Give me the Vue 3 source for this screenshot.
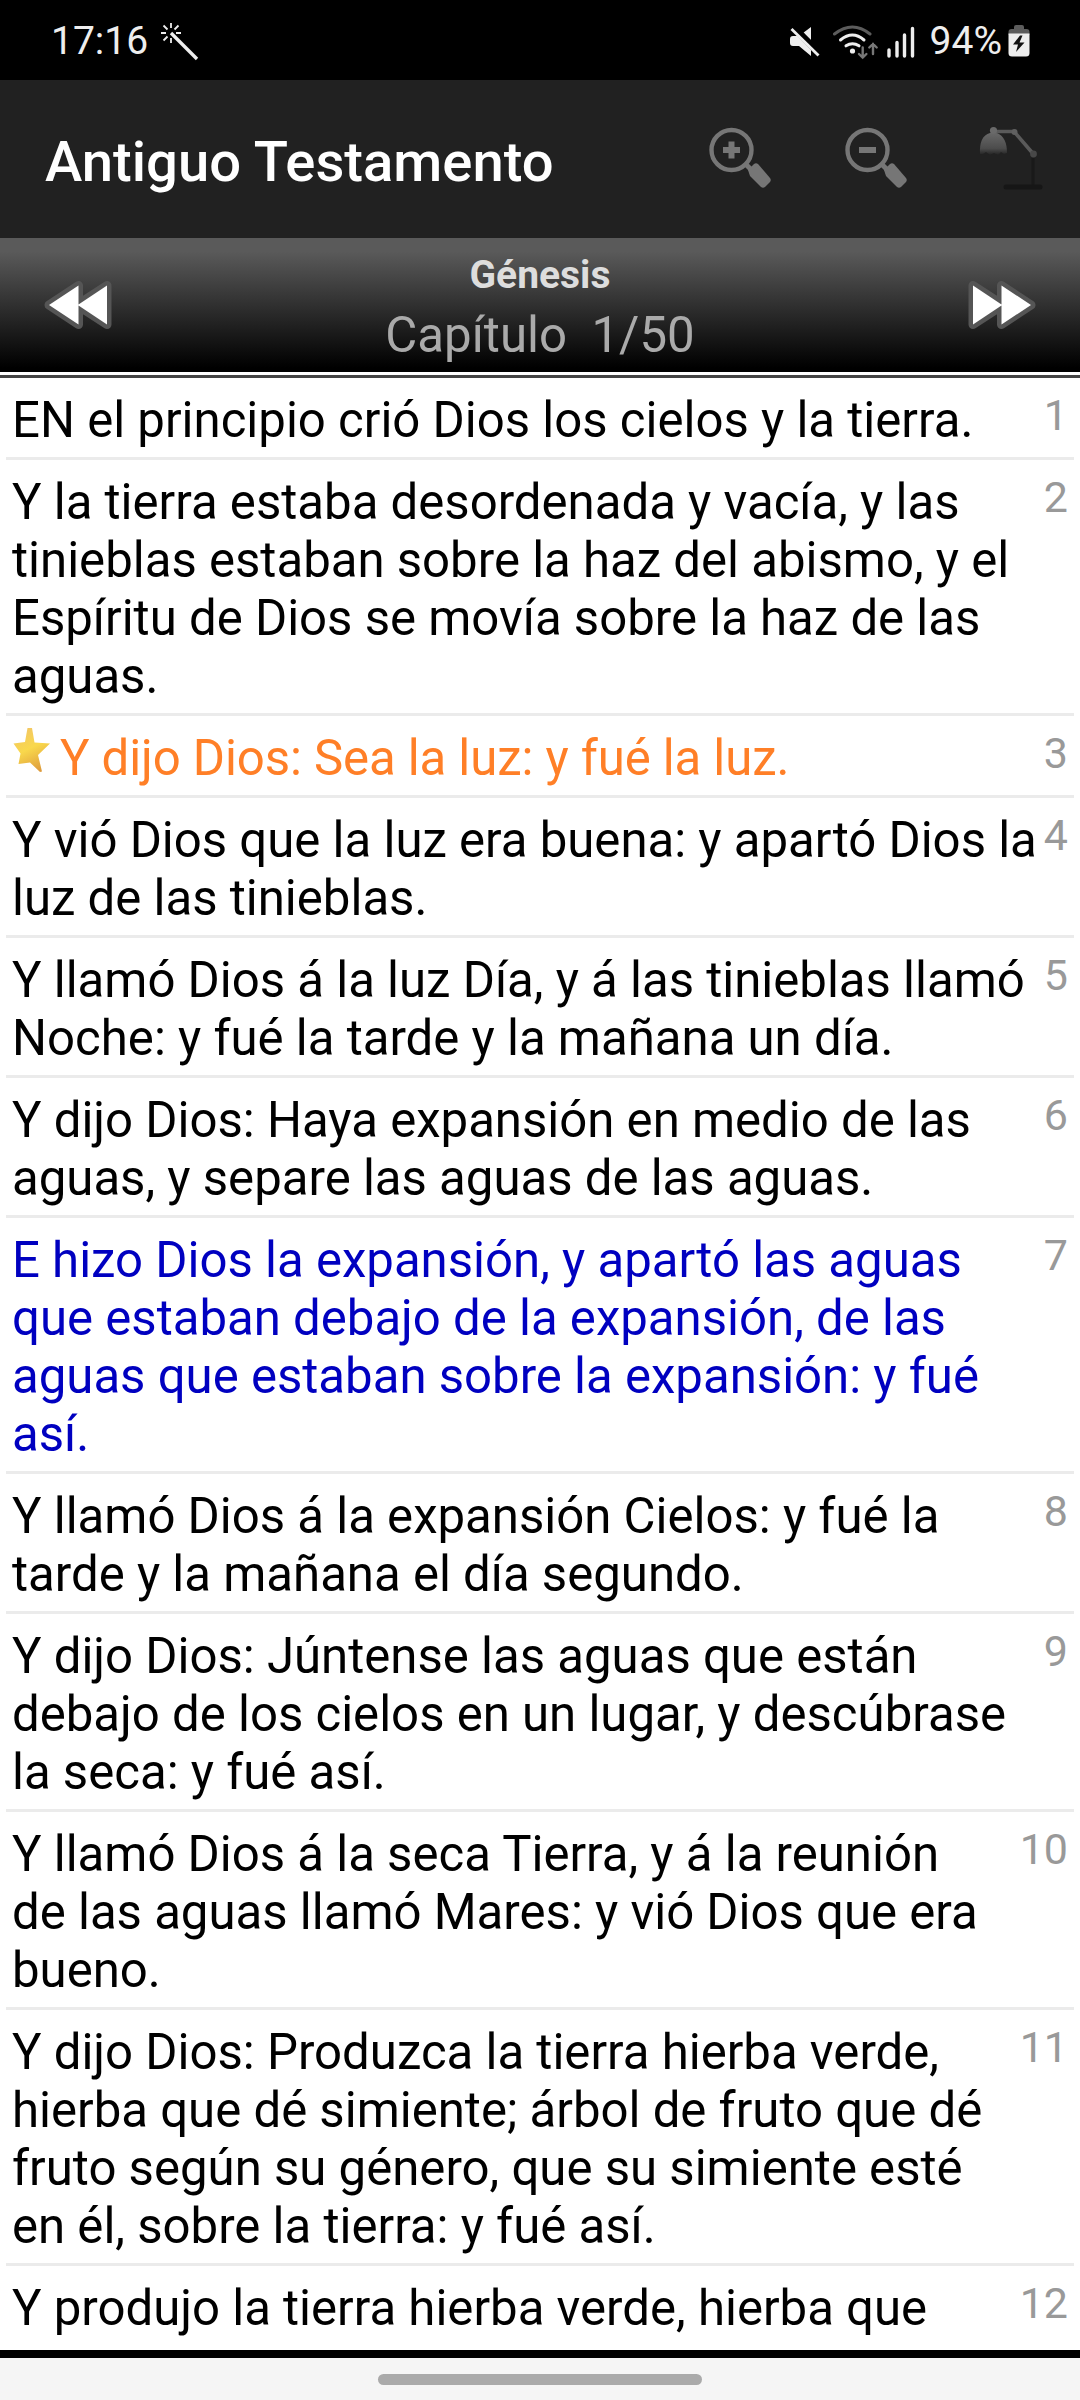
<script setup>
const verses = [
  { n: 1, lines: ['EN el principio crió Dios los cielos y la tierra.'] },
  {
    n: 2,
    lines: [
      'Y la tierra estaba desordenada y vacía, y las',
      'tinieblas estaban sobre la haz del abismo, y el',
      'Espíritu de Dios se movía sobre la haz de las',
      'aguas.',
    ],
  },
  { n: 3, tone: 'orange', star: true, lines: ['Y dijo Dios: Sea la luz: y fué la luz.'] },
  { n: 4, lines: ['Y vió Dios que la luz era buena: y apartó Dios la', 'luz de las tinieblas.'] },
  { n: 5, lines: ['Y llamó Dios á la luz Día, y á las tinieblas llamó', 'Noche: y fué la tarde y la mañana un día.'] },
  { n: 6, lines: ['Y dijo Dios: Haya expansión en medio de las', 'aguas, y separe las aguas de las aguas.'] },
  {
    n: 7,
    tone: 'blue',
    lines: [
      'E hizo Dios la expansión, y apartó las aguas',
      'que estaban debajo de la expansión, de las',
      'aguas que estaban sobre la expansión: y fué',
      'así.',
    ],
  },
  { n: 8, lines: ['Y llamó Dios á la expansión Cielos: y fué la', 'tarde y la mañana el día segundo.'] },
  {
    n: 9,
    lines: [
      'Y dijo Dios: Júntense las aguas que están',
      'debajo de los cielos en un lugar, y descúbrase',
      'la seca: y fué así.',
    ],
  },
  {
    n: 10,
    lines: ['Y llamó Dios á la seca Tierra, y á la reunión', 'de las aguas llamó Mares: y vió Dios que era', 'bueno.'],
  },
  {
    n: 11,
    lines: [
      'Y dijo Dios: Produzca la tierra hierba verde,',
      'hierba que dé simiente; árbol de fruto que dé',
      'fruto según su género, que su simiente esté',
      'en él, sobre la tierra: y fué así.',
    ],
  },
  { n: 12, lines: ['Y produjo la tierra hierba verde, hierba que'] },
]
</script>

<template>
  <div class="screen">
    <header class="status">
      <span class="clock">17:16</span>
      <svg class="wand" width="40" height="40" viewBox="0 0 40 40" fill="none" stroke="#eee">
        <path d="M11 11L37 37" stroke-width="3.4" />
        <path d="M11 1v5M11 16v5M1 11h5M16 11h5M3.5 3.5l4 4M18.500 3.500l-4 4M3.500 18.500l4-4" stroke-width="1.8" />
      </svg>
      <svg class="tray" width="128" height="40" viewBox="0 0 128 40">
        <g>
          <path d="M1 16q0-3 3-3h6L22 4v29L10 23H4q-3 0-3-3z" fill="#eee" />
          <path d="M4 3.600L31 31" stroke="#000" stroke-width="7" />
          <path d="M2.500 6L29.500 32.500" stroke="#eee" stroke-width="2.800" />
        </g>
        <g fill="none" stroke-linecap="round">
          <path d="M45.500 11Q63.500-3 81 11" stroke="#5c5c5c" stroke-width="3" />
          <path d="M51.500 17Q63.500 7 75 17" stroke="#eee" stroke-width="3" />
          <path d="M57 22.800Q63.500 18.500 70 22.800" stroke="#eee" stroke-width="3" />
          <circle cx="63.500" cy="28" r="2.600" fill="#eee" />
          <path d="M73.700 24.500v10M70 31l3.700 3.600 3.700-3.600M84 31V21M80.300 24.500l3.700-3.600 3.700 3.600" stroke="#777" stroke-width="2.400" />
        </g>
        <path d="M100 27v6M108 19.500V33M115.500 12V33M123.500 5.500V33" stroke="#eee" stroke-width="3.400" stroke-linecap="round" />
      </svg>
      <span class="percent">94%</span>
      <svg class="battery" width="22" height="34" viewBox="0 0 22 34">
        <path d="M0.500 10V7q0-3 3-3H6V2q0-2 2-2h6q2 0 2 2v2h2.500q3 0 3 3v3z" fill="#5c5c5c" />
        <path d="M0.500 8.500h21V28q0 3.500-3.500 3.500H4Q0.500 31.500 0.500 28z" fill="#eee" />
        <path d="M12 10.500L5 19.500h5L8 27l8.500-9.500h-5l3-7z" fill="#111" />
      </svg>
    </header>

    <div class="appbar">
      <h1>Antiguo Testamento</h1>
      <div class="actions">
        <svg v-for="kind in ['plus', 'minus']" :key="kind" width="64" height="64" viewBox="0 0 64 64" fill="none" stroke="#767676">
          <circle cx="22.500" cy="23" r="20" stroke-width="4.400" />
          <path d="M14 23h17" stroke-width="6" />
          <path v-if="kind === 'plus'" d="M22.500 14.500v17" stroke-width="6" />
          <path d="M36 36.500l6 6" stroke-width="5" />
          <path d="M39 43l6-6q2-1.500 4 0L61 51q1.500 2 0 4l-5 5q-2 1.500-4 0L41 49z" fill="#767676" stroke="none" />
        </svg>
        <svg class="lamp" width="66" height="66" viewBox="0 0 66 66" fill="none">
          <defs>
            <linearGradient id="shade" x1="0" y1="0" x2="0" y2="1">
              <stop offset="0" stop-color="#686868" />
              <stop offset="0.700" stop-color="#4c4c4c" />
              <stop offset="1" stop-color="#222" />
            </linearGradient>
          </defs>
          <path d="M2 28Q1 10 12 7h7q10 4 10 20l-3 1-3-2-3 3-4-2-4 2-4-3-3 2z" fill="url(#shade)" />
          <path d="M15 5.500H36L54.500 27" stroke="#5a5a5a" stroke-width="3.600" />
          <circle cx="15.500" cy="4.500" r="3.600" fill="#6a6a6a" />
          <circle cx="36.500" cy="6" r="3" fill="#606060" />
          <circle cx="55.500" cy="28" r="3.400" fill="#484848" />
          <path d="M55 32v29" stroke="#191919" stroke-width="3" />
          <path d="M28 61h34" stroke="#161616" stroke-width="5" stroke-linecap="round" />
        </svg>
      </div>
    </div>

    <nav class="chapter">
      <svg width="68" height="50" viewBox="0 0 68 50">
        <path d="M5 25L34.500 5.500V24L63 5.500V44.500L34.500 26V44.500z" fill="#555" stroke="#555" stroke-width="9" stroke-linejoin="round" />
        <path d="M5 25L34.500 5.500V24.500L63 5.500V44.500L34.500 25.500V44.500z" fill="#fff" />
      </svg>
      <div class="place">
        <strong>Génesis</strong>
        <span>Capítulo&nbsp; 1/50</span>
      </div>
      <svg width="68" height="50" viewBox="0 0 68 50">
        <path d="M63 25L33.500 5.500V24L5 5.500V44.500L33.500 26V44.500z" fill="#555" stroke="#555" stroke-width="9" stroke-linejoin="round" />
        <path d="M63 25L33.500 5.500V24.500L5 5.500V44.500L33.500 25.500V44.500z" fill="#fff" />
      </svg>
    </nav>
    <div class="rule"></div>

    <main class="verses">
      <article v-for="v in verses" :key="v.n" class="verse" :class="v.tone">
        <svg v-if="v.star" class="star" width="37" height="46" viewBox="0 0 37 46">
          <defs>
            <linearGradient id="gold" x1="0.300" y1="0" x2="0.700" y2="1">
              <stop offset="0" stop-color="#f3c765" />
              <stop offset="0.450" stop-color="#f9d84c" />
              <stop offset="1" stop-color="#dd9a3c" />
            </linearGradient>
          </defs>
          <path d="M14.500 0L19 0L21.500 14.500L37 15.500L25 27L29 43.500L27 44L17 34.500L5.500 36L7.500 25.500L0.500 15.500L12 14z" fill="url(#gold)" />
        </svg>
        <p>{{ v.lines.join('\n') }}</p>
        <span class="num">{{ v.n }}</span>
      </article>
    </main>

    <footer class="gesture"><i></i></footer>
  </div>
</template>

<style>
body {
  margin: 0;
}
</style>

<style scoped>
.screen {
  width: 1080px;
  height: 2400px;
  display: flex;
  flex-direction: column;
  overflow: hidden;
  background: #fff;
  font-family: Roboto, sans-serif;
}
.status {
  flex: none;
  height: 80px;
  box-sizing: border-box;
  display: flex;
  align-items: flex-start;
  padding: 22px 50px 0 51px;
  background: #000;
  color: #eee;
  font-size: 39px;
  line-height: 38px;
}
.wand {
  margin-left: 12px;
}
.tray {
  margin: 1px 13px 0 auto;
}
.battery {
  margin: 3px 0 0 6px;
}
.appbar {
  flex: none;
  height: 158px;
  display: flex;
  align-items: center;
  justify-content: space-between;
  padding: 0 36px 0 45px;
  background: #212121;
}
h1 {
  margin: 5px 0 0;
  color: #fff;
  font-size: 56.2px;
  font-weight: 500;
}
.actions {
  display: flex;
  gap: 72px;
}
.actions svg {
  filter: blur(0.6px);
}
.lamp {
  margin: -1px 0 0 -3px;
}
.chapter {
  flex: none;
  height: 134px;
  box-sizing: border-box;
  display: flex;
  align-items: center;
  justify-content: space-between;
  padding: 0 44px;
  background: linear-gradient(#5a5a5a 0, #5a5a5a 10%, #303030 50%, #000 97%);
}
.chapter svg {
  overflow: visible;
}
.place {
  display: flex;
  flex-direction: column;
  align-items: center;
  padding-top: 4px;
}
.place strong {
  color: #ddd;
  font-size: 39px;
  line-height: 56px;
}
.place span {
  color: #aaa;
  font-size: 49.2px;
  line-height: 64px;
}
.rule {
  flex: none;
  height: 3px;
  border-top: 3px solid #fff;
  background: #444;
}
.verses {
  flex: 1;
  min-height: 0;
  overflow: hidden;
  padding: 0 6px;
}
.verse {
  display: flex;
  align-items: flex-start;
  padding: 13px 6px 8px;
  border-bottom: 3px solid #ebebeb;
  color: #000;
}
.verse:last-child {
  border-bottom: 0;
}
.orange {
  color: #ff7f27;
}
.orange p {
  letter-spacing: -0.08px;
}
.blue {
  color: #0000c0;
}
.verse p {
  margin: 0;
  flex: 1;
  white-space: pre;
  font-size: 49.14px;
  line-height: 58px;
}
.star {
  margin: -1px 10px 0 1px;
}
.num {
  margin-top: 1px;
  color: #999;
  font-size: 43px;
  line-height: 46px;
}
.gesture {
  flex: none;
  height: 42px;
  border-top: 8px solid #000;
  background: #f5f5f5;
  display: flex;
  justify-content: center;
}
.gesture i {
  width: 324px;
  height: 11px;
  margin-top: 16px;
  border-radius: 6px;
  background: #aaa;
}
</style>
